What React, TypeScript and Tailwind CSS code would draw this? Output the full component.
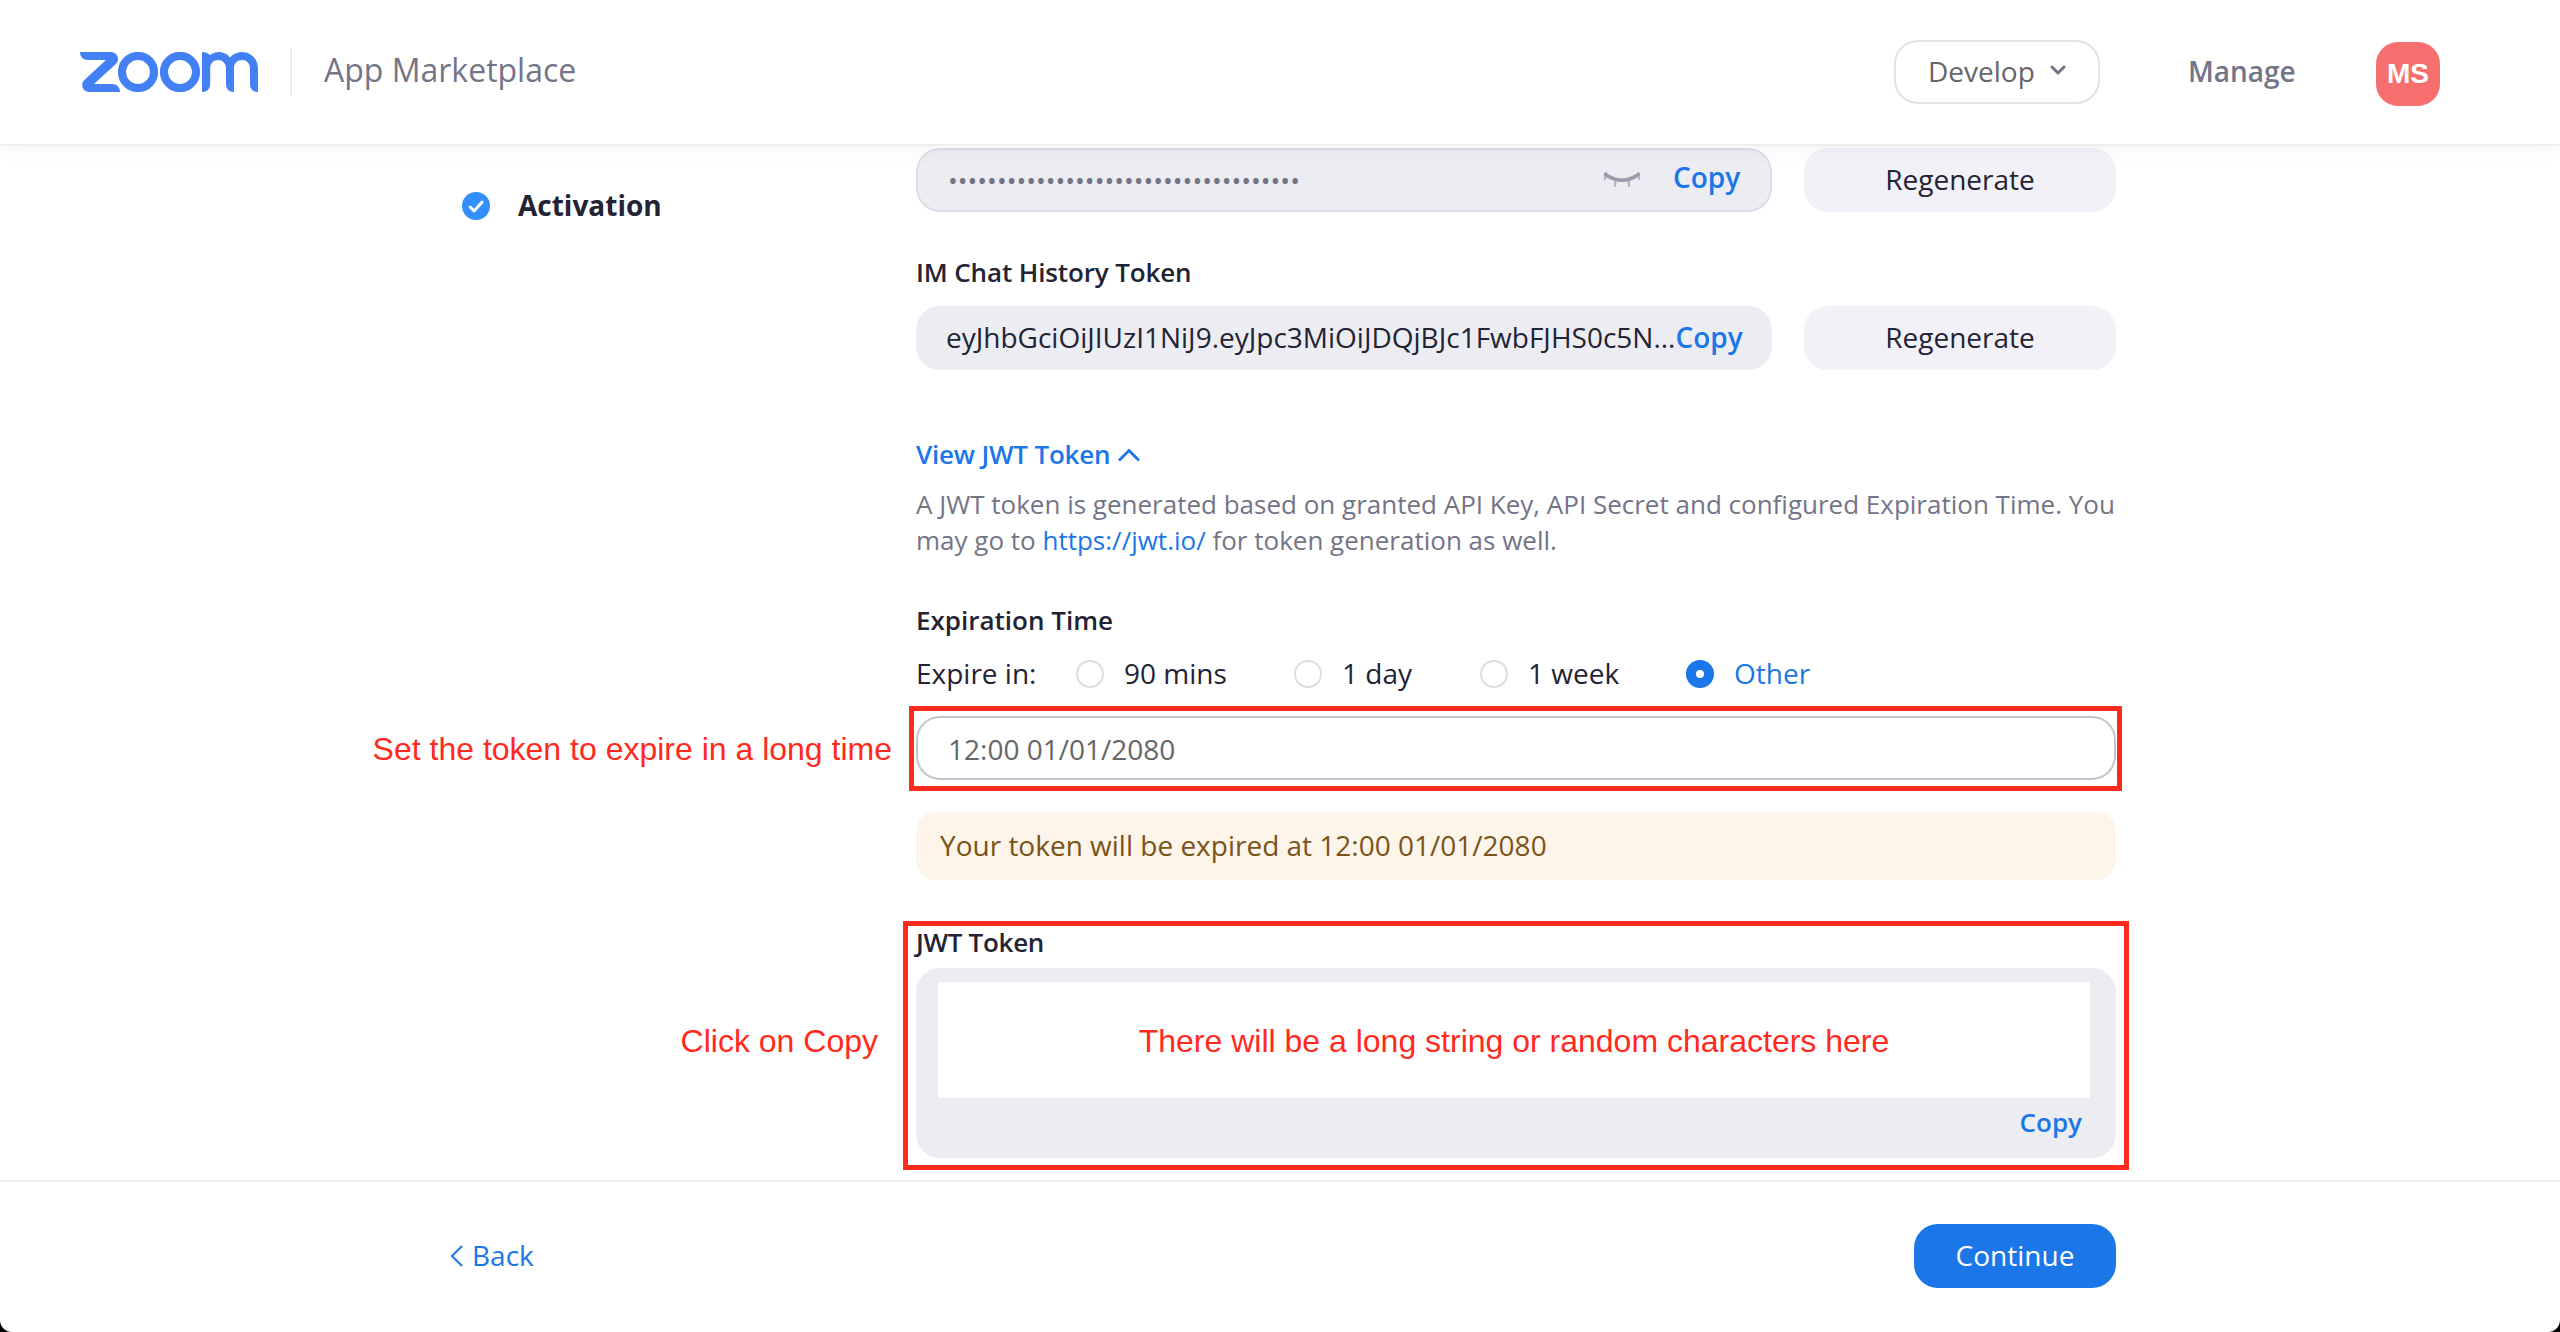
import type { ReactNode } from "react";

function ZoomLogo() {
  return (
    <svg width="178" height="40" viewBox="0 0 178 40" className="shrink-0" fill="#4380f4" aria-label="zoom">
      <path d="M0 0H30.5C35 0 38 3 38 7C38 9 37.3 10.5 35.8 12L14 32H32C37 32 40 35.5 40 40H9.5C5 40 2.2 37 2.2 33C2.2 31 2.9 29.6 4.4 28L26 8H8C3 8 0 4.5 0 0Z" />
      <circle cx="58" cy="20" r="16" fill="none" stroke="#4380f4" strokeWidth="8.2" />
      <circle cx="100" cy="20" r="16" fill="none" stroke="#4380f4" strokeWidth="8.2" />
      <path d="M122 0C125 0 128 1 130 3C133 1 136 0 138.5 0C143.5 0 147.5 2.2 150 5.6C152.8 2.2 156.8 0 161.5 0C171 0 178 7 178 16.5V40C173 40 170 37 170 32V16C170 11.5 166.5 8 162 8C157.5 8 154 11.5 154 16V40C149 40 146 37 146 32V16C146 11.5 142.5 8 138 8C133.5 8 130.2 11.5 130.2 16V32C130 37 127 40 122 40Z" />
    </svg>
  );
}

function Header() {
  return (
    <header className="relative z-10 flex h-[146px] shrink-0 items-center border-b-2 border-[#efefef] bg-white pr-[120px] pl-20 shadow-[0_2px_20px_rgba(0,0,0,0.05)]">
      <ZoomLogo />
      <div className="ml-8 h-12 w-0.5 bg-[#ecedf3]" />
      <span className="ml-8 pb-[4px] text-[32px] leading-10 text-[#747487]">App Marketplace</span>
      <div className="ml-auto flex items-center">
        <button className="flex h-16 w-[206px] items-center rounded-[24px] border-2 border-[#dfe3e8] pl-[32px]">
          <span className="pb-[2px] text-[28px] leading-10 text-[#666666]">Develop</span>
          <svg width="18" height="12" viewBox="0 0 18 12" className="mb-1 ml-[14px]" fill="none" stroke="#747487" strokeWidth="3" strokeLinecap="round" strokeLinejoin="round">
            <path d="M3 3L9 9L15 3" />
          </svg>
        </button>
        <span className="ml-[88px] w-[108px] pb-[2px] text-[28px] leading-10 font-semibold text-[#747487]">Manage</span>
        <div className="mt-1 ml-20 flex size-16 items-center justify-center rounded-[22px] bg-[#f56f6f] font-['Liberation_Sans',sans-serif] text-[28px] leading-10 font-bold text-white">
          MS
        </div>
      </div>
    </header>
  );
}

function Regenerate() {
  return (
    <button className="h-16 w-[312px] rounded-[24px] bg-[#f2f1f7] pb-[2px] text-[28px] leading-[62px] text-[#232333]">Regenerate</button>
  );
}

function Label({ children }: { children: ReactNode }) {
  return <div className="text-[26px] leading-9 font-semibold text-[#232333]">{children}</div>;
}

function Radio({ label, checked = false, width }: { label: string; checked?: boolean; width: string }) {
  return (
    <div className={`flex items-center gap-5 ${width}`}>
      {checked ? (
        <span className="flex size-7 items-center justify-center rounded-full bg-[#1b76e8]">
          <span className="size-2 rounded-full bg-white" />
        </span>
      ) : (
        <span className="size-7 rounded-full border-2 border-[#dddde6]" />
      )}
      <span className={`pb-[2px] leading-9 ${checked ? "text-[#1b76e8]" : "text-[#232333]"}`}>{label}</span>
    </div>
  );
}

function SecretField() {
  return (
    <div className="flex h-16 w-[856px] items-center rounded-[24px] border-2 border-[#dcdfe5] bg-[#ecedf3] pr-[29px] pl-[30px]">
      <span className="text-[26px] leading-9 text-[#747487]">{"•".repeat(36)}</span>
      <svg width="40" height="20" viewBox="0 0 40 20" className="mr-[31px] ml-auto" fill="none" stroke="#9a9aac" strokeLinecap="round">
        <path d="M3.5 4.5Q20 16 36.5 4.5" strokeWidth="3.6" />
        <path d="M4 3L2.8 9M36 3L37.2 9M13.5 10L13 16M26.5 10L27 16" strokeWidth="2.2" opacity="0.7" />
      </svg>
      <span className="w-[68px] pb-[6px] text-[28px] leading-9 font-semibold text-[#1b76e8]">Copy</span>
    </div>
  );
}

function Content() {
  return (
    <main className="flex min-h-0 grow pl-[462px]">
      <aside className="w-[454px] shrink-0 pt-[46px]">
        <div className="flex h-7 items-center gap-7">
          <svg width="28" height="28" viewBox="0 0 28 28">
            <circle cx="14" cy="14" r="14" fill="#338ffb" />
            <path d="M8.2 15L12 19L20 10.2" fill="none" stroke="white" strokeWidth="3" strokeLinecap="round" strokeLinejoin="round" />
          </svg>
          <span className="pb-[2px] text-[28px] leading-10 font-bold text-[#232333]">Activation</span>
        </div>
      </aside>
      <section className="w-[1200px] shrink-0 pt-0.5 text-[28px]">
        <div className="flex gap-8">
          <SecretField />
          <Regenerate />
        </div>

        <div className="mt-[42px] tracking-[-0.13px]">
          <Label>IM Chat History Token</Label>
        </div>
        <div className="mt-4 flex gap-8">
          <div className="flex h-16 w-[856px] items-center rounded-[24px] bg-[#ecedf3] pb-[2px] pl-[30px] leading-9 whitespace-nowrap">
            <span className="text-[#232333]">eyJhbGciOiJIUzI1NiJ9.eyJpc3MiOiJDQjBJc1FwbFJHS0c5N...</span>
            <span className="font-semibold text-[#1b76e8]">Copy</span>
          </div>
          <Regenerate />
        </div>

        <div className="mt-[66px] flex items-center text-[26px] leading-9 font-semibold text-[#1b76e8]">
          <span className="tracking-[-0.2px]">View JWT Token</span>
          <svg width="24" height="16" viewBox="0 0 24 16" className="mt-[2px] ml-[7px]" fill="none" stroke="#1b76e8" strokeWidth="2.8">
            <path d="M2 13.5L12 3.5L22 13.5" />
          </svg>
        </div>
        <p className="mt-[14px] text-[26px] leading-9 text-[#747487]">
          A JWT token is generated based on granted API Key, API Secret and configured Expiration Time. You
          <br />
          may go to <a className="text-[#1b76e8]">https://jwt.io/</a> for token generation as well.
        </p>

        <div className="mt-[44px]">
          <Label>Expiration Time</Label>
        </div>
        <div className="mt-4 flex h-10 items-center">
          <span className="w-[160px] pb-[2px] leading-9 text-[#232333]">Expire in:</span>
          <Radio label="90 mins" width="w-[218px]" />
          <Radio label="1 day" width="w-[186px]" />
          <Radio label="1 week" width="w-[206px]" />
          <Radio label="Other" checked width="w-[160px]" />
        </div>

        <div className="relative mt-[22px]">
          <div className="flex h-16 items-center rounded-[24px] border-2 border-[#c1c6ce] pt-[2px] pl-[30px] leading-9 text-[#666666]">12:00 01/01/2080</div>
          <div className="absolute -top-[10px] -right-[6px] -bottom-[11px] -left-[7px] border-5 border-[#ff2a1d]" />
          <div className="absolute top-[1px] right-full mr-6 font-['Liberation_Sans',sans-serif] text-[32px] leading-[64px] whitespace-nowrap text-[#ff2a1d]">
            Set the token to expire in a long time
          </div>
        </div>

        <div className="mt-8 flex h-[68px] items-center rounded-[20px] bg-[#fdf5ea] pb-[2px] pl-6 leading-9 text-[#7a5318]">
          Your token will be expired at 12:00 01/01/2080
        </div>

        <div className="relative mt-[44px]">
          <div className="tracking-[-0.3px]">
            <Label>JWT Token</Label>
          </div>
          <div className="mt-2 flex h-[190px] flex-col rounded-[24px] bg-[#ecedf3] pt-[14px] pr-[26px] pl-[22px]">
            <div className="flex h-[116px] shrink-0 items-center justify-center bg-white pt-[2px] font-['Liberation_Sans',sans-serif] text-[32px] leading-10 text-[#ff2a1d]">
              There will be a long string or random characters here
            </div>
            <span className="mt-[6px] mr-2 self-end text-[26px] leading-9 font-semibold text-[#1b76e8]">Copy</span>
          </div>
          <div className="absolute -top-[3px] -right-[13px] -bottom-[12px] -left-[13px] border-5 border-[#ff2a1d]" />
          <div className="absolute top-[97px] right-full mr-[38px] font-['Liberation_Sans',sans-serif] text-[32px] leading-10 whitespace-nowrap text-[#ff2a1d]">
            Click on Copy
          </div>
        </div>
      </section>
    </main>
  );
}

function Footer() {
  return (
    <footer className="flex h-[152px] shrink-0 items-center border-t-2 border-[#ecedf3] pr-[444px] pl-[450px]">
      <a className="flex items-center text-[28px] leading-9 text-[#1b76e8]">
        <svg width="14" height="24" viewBox="0 0 14 24" className="mb-[2px]" fill="none" stroke="#1b76e8" strokeWidth="2">
          <path d="M12 2L2 12L12 22" />
        </svg>
        <span className="ml-2 pb-1">Back</span>
      </a>
      <button className="mb-[2px] ml-auto h-16 w-[202px] rounded-[24px] bg-[#1b76e8] pb-[2px] text-[28px] leading-[62px] text-white">Continue</button>
    </footer>
  );
}

export default function App() {
  return (
    <div className="bg-black font-['Open_Sans',sans-serif]">
      <div className="flex h-[1332px] w-[2560px] flex-col overflow-hidden rounded-b-[12px] bg-white">
        <Header />
        <Content />
        <Footer />
      </div>
    </div>
  );
}
